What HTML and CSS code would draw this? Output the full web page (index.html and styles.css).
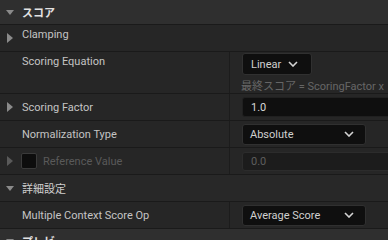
FILE: index.html
```html
<!DOCTYPE html>
<html>
<head>
<meta charset="utf-8">
<link rel="stylesheet" href="styles.css">
</head>
<body>
<div class="panel">
  <div class="row cat">
    <span class="arrow down"></span><span class="cat-label">スコア</span>
  </div>
  <div class="row clamp">
    <span class="arrow right"></span><span class="label top">Clamping</span>
  </div>
  <div class="row eq">
    <div class="name"><span class="label eq-label">Scoring Equation</span></div>
    <div class="value eq-value">
      <div class="combo linear"><span>Linear</span><svg class="chev" viewBox="0 0 10 6"><path d="M1 1 L5 5 L9 1" /></svg></div>
      <div class="formula">最終スコア = ScoringFactor x</div>
    </div>
  </div>
  <div class="row">
    <div class="name"><span class="arrow right"></span><span class="label">Scoring Factor</span></div>
    <div class="value"><div class="input num">1.0</div></div>
  </div>
  <div class="row">
    <div class="name"><span class="label">Normalization Type</span></div>
    <div class="value"><div class="combo wide"><span>Absolute</span><svg class="chev" viewBox="0 0 10 6"><path d="M1 1 L5 5 L9 1" /></svg></div></div>
  </div>
  <div class="row">
    <div class="name"><span class="arrow right dim"></span><span class="check"></span><span class="label disabled">Reference Value</span></div>
    <div class="value"><div class="input num ref">0.0</div></div>
  </div>
  <div class="row sub">
    <span class="arrow down"></span><span class="sub-label">詳細設定</span>
  </div>
  <div class="row">
    <div class="name"><span class="label">Multiple Context Score Op</span></div>
    <div class="value"><div class="combo wide"><span>Average Score</span><svg class="chev" viewBox="0 0 10 6"><path d="M1 1 L5 5 L9 1" /></svg></div></div>
  </div>
  <div class="row cat">
    <span class="arrow down"></span><span class="cat-label">プレビュー</span>
  </div>
</div>
</body>
</html>
```
FILE: styles.css
```css
html, body {
  margin: 0;
  padding: 0;
  background: #262626;
  overflow: hidden;
  width: 388px;
  height: 240px;
}
.panel {
  font-family: Roboto, "Noto Sans CJK JP", sans-serif;
  font-size: 11px;
  color: #c4c4c4;
  width: 388px;
}
.row {
  display: flex;
  align-items: stretch;
  height: 26px;
  border-bottom: 1px solid #1a1a1a;
  background: #262626;
  box-sizing: content-box;
  position: relative;
}
.row.cat {
  height: 24px;
  background: #2f2f2f;
  align-items: center;
}
.row.sub {
  align-items: center;
  background: #282828;
}
.row.clamp {
  align-items: flex-start;
}
.row.eq {
  height: 41px;
}
.name {
  width: 229px;
  flex: none;
  border-right: 1px solid #1c1c1c;
  display: flex;
  align-items: center;
  position: relative;
}
.value {
  flex: 1;
  display: flex;
  align-items: center;
  padding-left: 12px;
  min-width: 0;
}
.arrow {
  position: absolute;
  width: 0;
  height: 0;
}
.arrow.down {
  left: 6px;
  top: 50%;
  margin-top: -2px;
  border-left: 4.5px solid transparent;
  border-right: 4.5px solid transparent;
  border-top: 5px solid #8a8a8a;
}
.arrow.right {
  left: 7px;
  top: 50%;
  margin-top: -5px;
  border-top: 5px solid transparent;
  border-bottom: 5px solid transparent;
  border-left: 6px solid #8a8a8a;
}
.arrow.dim {
  border-left-color: #5a5a5a;
}
.cat-label {
  margin-left: 22px;
  color: #e2e2e2;
  font-weight: bold;
  font-size: 11px;
}
.sub-label {
  margin-left: 22px;
  color: #cfcfcf;
}
.label {
  margin-left: 22px;
  white-space: nowrap;
}
.label.top {
  margin-top: 3px;
}
.eq .name {
  align-items: flex-start;
}
.eq-label {
  margin-top: 3px;
}
.eq-value {
  flex-direction: column;
  align-items: flex-start;
  justify-content: flex-start;
  padding-top: 1px;
}
.combo {
  box-sizing: border-box;
  height: 21px;
  background: #0f0f0f;
  border: 1px solid #303030;
  border-radius: 3px;
  display: flex;
  align-items: center;
  justify-content: space-between;
  padding: 0 11px 0 7px;
  color: #d0d0d0;
}
.combo.linear {
  height: 24px;
  width: 70px;
  padding: 0 13px 0 8px;
}
.combo.wide {
  width: 124px;
}
.chev {
  width: 10px;
  height: 6px;
  fill: none;
  stroke: #d4d4d4;
  stroke-width: 1.6;
}
.formula {
  margin-top: 2px;
  margin-left: -1px;
  color: #666666;
  white-space: nowrap;
}
.input {
  box-sizing: border-box;
  height: 20px;
  width: 170px;
  flex: none;
  background: #0f0f0f;
  border: 1px solid #202020;
  border-radius: 3px;
  display: flex;
  align-items: center;
  padding-left: 8px;
  color: #d8d8d8;
}
.input.ref {
  height: 19px;
  color: #5e5e5e;
  background: #1c1c1c;
  border-color: #2c2c2c;
}
.check {
  box-sizing: border-box;
  width: 16px;
  height: 16px;
  margin-left: 21px;
  background: #0d0d0d;
  border: 1px solid #3a3a3a;
  border-radius: 2px;
  flex: none;
}
.check + .label {
  margin-left: 6px;
}
.label.disabled {
  color: #5a5a5a;
}
```
